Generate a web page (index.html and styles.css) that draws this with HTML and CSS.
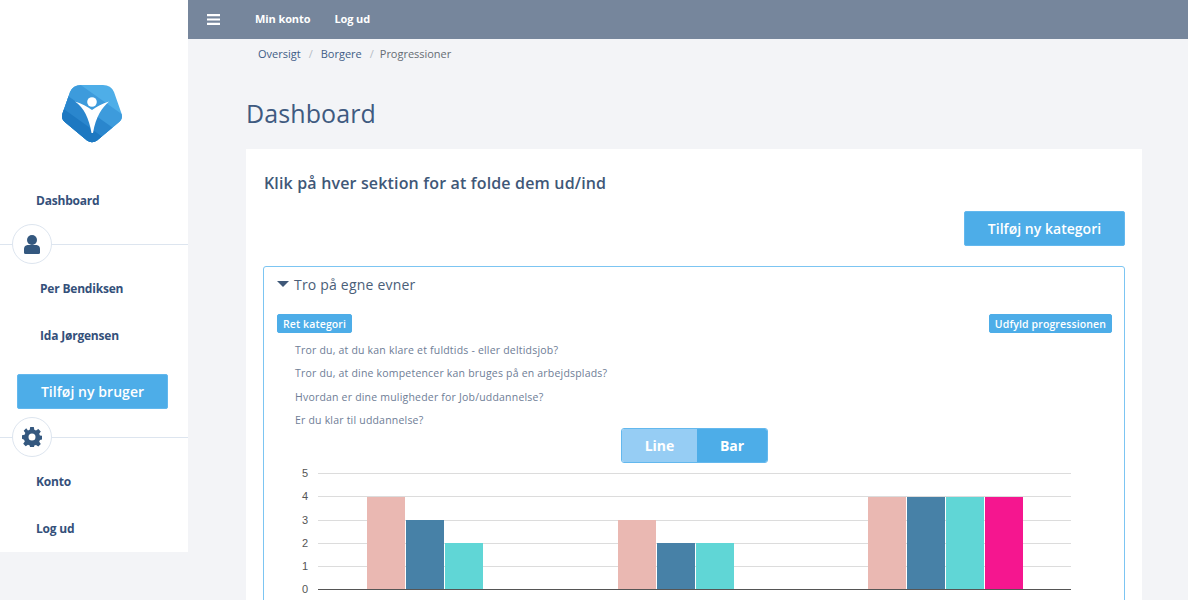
FILE: index.html
```html
<!DOCTYPE html>
<html lang="da">
<head>
<meta charset="utf-8">
<title>Dashboard</title>
<link rel="stylesheet" href="styles.css">
</head>
<body>
<div class="shell">
  <aside class="sidebar">
    <div class="logo">
      <svg width="62" height="60" viewBox="0 0 62 60">
        <defs>
          <clipPath id="pent"><path d="M20 2H42Q50 2 53 9L60 29Q63 36 57 40L36 57.500Q31 61 26 57.500L5 40Q-1 36 2 29L9 9Q12 2 20 2Z"/></clipPath>
        </defs>
        <g clip-path="url(#pent)">
          <rect width="62" height="60" fill="#4eaee8"/>
          <path d="M0 -12L62 32V60H0Z" fill="#3d9bdc"/>
          <path d="M0 8L62 52V60H0Z" fill="#2a86cd"/>
          <path d="M0 24L50 60H0Z" fill="#1d78c1"/>
        </g>
        <circle cx="31" cy="19" r="4.800" fill="#fff"/>
        <path d="M14 18.500C21 20.500 26 23.500 31 27C36 23.500 41 20.500 48 18.500C41 25 35 33 32 50H30.500C28 35 23 25 14 18.500Z" fill="#fff"/>
      </svg>
    </div>
    <a class="nav-link first">Dashboard</a>
    <div class="divider">
      <span class="divider-badge">
        <svg width="16" height="19" viewBox="0 0 16 19"><circle cx="8" cy="5" r="5" fill="#34587f"/><path d="M1.500 19Q0 19 0 17.500V14Q0 10.500 3.500 10H12.500Q16 10.500 16 14V17.500Q16 19 14.500 19Z" fill="#34587f"/></svg>
      </span>
    </div>
    <a class="nav-link user">Per Bendiksen</a>
    <a class="nav-link user">Ida Jørgensen</a>
    <button class="btn btn-user">Tilføj ny bruger</button>
    <div class="divider">
      <span class="divider-badge">
        <svg width="20" height="20" viewBox="0 0 20 20"><path fill="#34587f" fill-rule="evenodd" d="M8.200 0h3.600l.5 2.800 1.700.7 2.300-1.600 2.500 2.500-1.600 2.300.7 1.700 2.600.5v3.600l-2.600.5-.7 1.700 1.600 2.300-2.500 2.500-2.300-1.600-1.700.7-.5 2.400H8.200l-.5-2.600-1.700-.7-2.300 1.600-2.500-2.500 1.600-2.300-.7-1.700L0 11.800V8.200l2.600-.5.7-1.700-1.600-2.300 2.500-2.500L6 3.500l1.700-.7ZM10 6.500a3.500 3.500 0 1 0 0 7 3.500 3.500 0 0 0 0-7Z"/></svg>
      </span>
    </div>
    <a class="nav-link konto">Konto</a>
    <a class="nav-link logout">Log ud</a>
  </aside>
  <div class="main">
    <header class="topbar">
      <svg class="burger" width="13" height="11" viewBox="0 0 13 11"><path d="M0 0h13v2.200H0zM0 4.400h13v2.200H0zM0 8.800h13V11H0z" fill="#fff"/></svg>
      <a class="top-link">Min konto</a>
      <a class="top-link">Log ud</a>
    </header>
    <nav class="crumbs">
      <a>Oversigt</a><span class="sep">/</span><a>Borgere</a><span class="sep">/</span><span class="cur">Progressioner</span>
    </nav>
    <h1 class="title">Dashboard</h1>
    <section class="card">
      <h2 class="card-title">Klik på hver sektion for at folde dem ud/ind</h2>
      <div class="card-actions"><button class="btn btn-cat">Tilføj ny kategori</button></div>
      <div class="panel">
        <div class="panel-head"><span class="caret"></span><h3>Tro på egne evner</h3></div>
        <div class="panel-actions">
          <button class="btn btn-sm">Ret kategori</button>
          <button class="btn btn-sm">Udfyld progressionen</button>
        </div>
        <ul class="questions">
          <li>Tror du, at du kan klare et fuldtids - eller deltidsjob?</li>
          <li>Tror du, at dine kompetencer kan bruges på en arbejdsplads?</li>
          <li>Hvordan er dine muligheder for Job/uddannelse?</li>
          <li>Er du klar til uddannelse?</li>
        </ul>
        <div class="toggle"><span class="tg tg-off">Line</span><span class="tg tg-on">Bar</span></div>
        <div class="chart">
          <div class="axis"><span>5</span><span>4</span><span>3</span><span>2</span><span>1</span><span>0</span></div>
          <div class="plot">
            <div class="grid"><i></i><i></i><i></i><i></i><i></i><i></i></div>
            <div class="groups">
              <div class="group g1"><b class="pink v4"></b><b class="blue v3"></b><b class="teal v2"></b></div>
              <div class="group g2"><b class="pink v3"></b><b class="blue v2"></b><b class="teal v2"></b></div>
              <div class="group g3"><b class="pink v4"></b><b class="blue v4"></b><b class="teal v4"></b><b class="mag v4"></b></div>
            </div>
          </div>
        </div>
      </div>
    </section>
  </div>
</div>
</body>
</html>
```
FILE: styles.css
```css
* { box-sizing: border-box; }
html, body { margin: 0; height: 600px; overflow: hidden; }
body { background: #f3f4f7; font-family: "Open Sans", sans-serif; color: #3f5878; }
.shell { display: flex; align-items: flex-start; width: 1188px; height: 600px; }
.sidebar { width: 188px; height: 552px; background: #fff; flex: none; display: flex; flex-direction: column; }
.logo { height: 193px; padding: 83px 0 0 61px; }
.nav-link { display: block; font-size: 12px; font-weight: 700; color: #34507a; letter-spacing: -.2px; line-height: 16px; }
.first { padding-left: 36px; height: 51px; flex: none; }
.divider { position: relative; height: 1px; background: #dde5ef; flex: none; }
.divider-badge { position: absolute; left: 12px; top: -20px; width: 40px; height: 40px; border-radius: 50%; background: #fff; border: 1px solid #dde5ef; display: flex; align-items: center; justify-content: center; }
.user { padding-left: 40px; margin-top: 31px; }
.divider + .user { margin-top: 36px; }
.btn { border: 1px solid #63b8ee; background: #4dade8; color: #fff; font-family: "Open Sans", sans-serif; border-radius: 2px; display: inline-block; padding: 0; }
.btn-user { width: 151px; height: 35px; margin: 30px 0 0 17px; font-size: 14px; font-weight: 600; letter-spacing: .05px; flex: none; }
.btn-user + .divider { margin-top: 28px; }
.konto { padding-left: 36px; margin-top: 36px; }
.logout { padding-left: 36px; margin-top: 31px; }
.main { flex: 1; min-width: 0; }
.topbar { height: 39px; background: #76869c; display: flex; align-items: center; padding: 0 0 3px 19px; }
.burger { margin-right: 35px; margin-top: 2px; }
.top-link { color: #fff; font-size: 11px; font-weight: 700; letter-spacing: -.1px; margin-right: 24px; }
.crumbs { padding: 7px 0 0 70px; height: 35px; font-size: 11px; line-height: 16px; color: #3f5d86; }
.sep { color: #b5bcc6; margin: 0 8px; }
.cur { color: #666c74; margin-left: -2px; letter-spacing: -.02px; }
.title { margin: 0 0 0 58px; font-size: 25px; font-weight: 400; line-height: 34px; color: #3f5a80; height: 75px; padding-top: 22px; letter-spacing: .1px; }
.card { margin: 0 46px 0 58px; background: #fff; padding: 24px 17px 0; height: 460px; }
.card-title { margin: 0; font-size: 16px; font-weight: 600; line-height: 20px; color: #3f5878; letter-spacing: .16px; padding-left: 1px; }
.card-actions { display: flex; justify-content: flex-end; margin-top: 18px; }
.btn-cat { width: 161px; height: 35px; font-size: 14px; font-weight: 600; letter-spacing: .03px; }
.panel { margin-top: 20px; border: 1px solid #7cc5f2; border-radius: 3px; padding: 0 12px 0 13px; height: 340px; }
.panel-head { display: flex; align-items: center; height: 35px; }
.panel-head h3 { margin: 0 0 0 5px; font-size: 14px; font-weight: 500; color: #4a5e78; letter-spacing: .2px; }
.caret { width: 0; height: 0; border-left: 6px solid transparent; border-right: 6px solid transparent; border-top: 6px solid #3f5878; margin-bottom: 2px; }
.panel-actions { display: flex; justify-content: space-between; margin-top: 12px; }
.btn-sm { height: 19px; padding: 0 5px; font-size: 10.500px; font-weight: 600; letter-spacing: .12px; border-color: #4dade8; }
.questions { list-style: none; margin: 0; padding: 6px 0 0 18px; font-size: 10.500px; color: #6e7d96; letter-spacing: .2px; }
.questions li { height: 23.300px; line-height: 23.300px; }
.toggle { display: flex; width: 147px; height: 35px; margin: -4px auto 0; border: 1px solid #63b8ee; border-radius: 3px; overflow: hidden; font-size: 14px; font-weight: 700; color: #fff; }
.tg { display: flex; align-items: center; justify-content: center; }
.tg-off { width: 75px; background: #96cdf4; }
.tg-on { flex: 1; background: #4dade8; }
.chart { display: flex; margin-left: 25px; height: 135px; }
.axis { width: 16px; margin-top: -1px; font: 11px/23.200px "Liberation Sans", sans-serif; color: #555; display: flex; flex-direction: column; flex: none; }
.axis span { height: 23.200px; flex: none; }
.plot { position: relative; width: 753px; height: 117px; margin-top: 10px; flex: none; }
.grid { position: absolute; inset: 0; display: flex; flex-direction: column; justify-content: space-between; }
.grid i { display: block; height: 1px; background: #dcdcdc; }
.grid i:last-child { background: #555; }
.groups { position: absolute; left: 0; right: 0; bottom: 1px; top: 0; }
.group { position: absolute; bottom: 0; display: flex; align-items: flex-end; gap: 1px; }
.g1 { left: 49px; }
.g2 { left: 300px; }
.g3 { left: 550px; }
.group b { display: block; width: 38px; border: 1px solid transparent; border-bottom: 0; }
.pink { background: #eab8b2; border-color: #efc9c4; }
.blue { background: #4781a7; border-color: #3f7aa2; }
.teal { background: #60d6d6; border-color: #70dcdc; }
.mag { background: #f5168f; }
.v4 { height: 92px; }
.v3 { height: 69px; }
.v2 { height: 46px; }
```
